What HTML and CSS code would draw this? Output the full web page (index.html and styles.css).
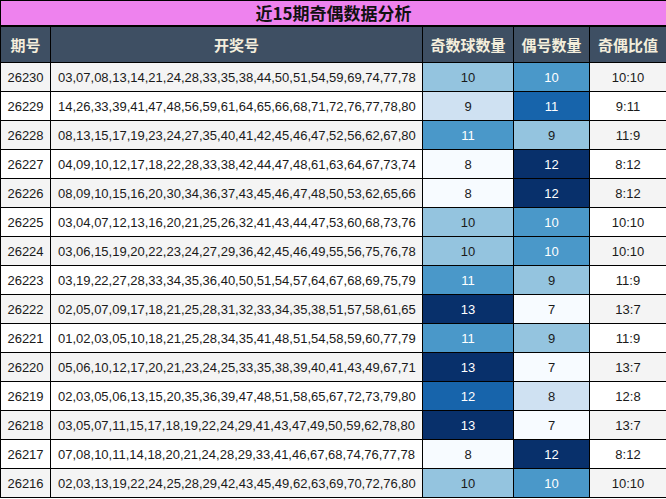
FILE: index.html
```html
<!DOCTYPE html>
<html lang="zh">
<head>
<meta charset="utf-8">
<link rel="stylesheet" href="styles.css">
</head>
<body>
<table class="grid">
  <colgroup>
    <col class="c-issue"><col class="c-nums"><col class="c-odd"><col class="c-even"><col class="c-ratio">
  </colgroup>
  <thead>
    <tr class="title-row"><th colspan="5">近15期奇偶数据分析</th></tr>
    <tr class="head-row"><th>期号</th><th>开奖号</th><th>奇数球数量</th><th>偶号数量</th><th>奇偶比值</th></tr>
  </thead>
  <tbody>
    <tr class="alt"><td>26230</td><td class="nums">03,07,08,13,14,21,24,28,33,35,38,44,50,51,54,59,69,74,77,78</td><td class="b10">10</td><td class="b11 w">10</td><td>10:10</td></tr>
    <tr><td>26229</td><td class="nums">14,26,33,39,41,47,48,56,59,61,64,65,66,68,71,72,76,77,78,80</td><td class="b9">9</td><td class="b12 w">11</td><td>9:11</td></tr>
    <tr class="alt"><td>26228</td><td class="nums">08,13,15,17,19,23,24,27,35,40,41,42,45,46,47,52,56,62,67,80</td><td class="b11 w">11</td><td class="b10">9</td><td>11:9</td></tr>
    <tr><td>26227</td><td class="nums">04,09,10,12,17,18,22,28,33,38,42,44,47,48,61,63,64,67,73,74</td><td class="b8">8</td><td class="b13 w">12</td><td>8:12</td></tr>
    <tr class="alt"><td>26226</td><td class="nums">08,09,10,15,16,20,30,34,36,37,43,45,46,47,48,50,53,62,65,66</td><td class="b8">8</td><td class="b13 w">12</td><td>8:12</td></tr>
    <tr><td>26225</td><td class="nums">03,04,07,12,13,16,20,21,25,26,32,41,43,44,47,53,60,68,73,76</td><td class="b10">10</td><td class="b11 w">10</td><td>10:10</td></tr>
    <tr class="alt"><td>26224</td><td class="nums">03,06,15,19,20,22,23,24,27,29,36,42,45,46,49,55,56,75,76,78</td><td class="b10">10</td><td class="b11 w">10</td><td>10:10</td></tr>
    <tr><td>26223</td><td class="nums">03,19,22,27,28,33,34,35,36,40,50,51,54,57,64,67,68,69,75,79</td><td class="b11 w">11</td><td class="b10">9</td><td>11:9</td></tr>
    <tr class="alt"><td>26222</td><td class="nums">02,05,07,09,17,18,21,25,28,31,32,33,34,35,38,51,57,58,61,65</td><td class="b13 w">13</td><td class="b8">7</td><td>13:7</td></tr>
    <tr><td>26221</td><td class="nums">01,02,03,05,10,18,21,25,28,34,35,41,48,51,54,58,59,60,77,79</td><td class="b11 w">11</td><td class="b10">9</td><td>11:9</td></tr>
    <tr class="alt"><td>26220</td><td class="nums">05,06,10,12,17,20,21,23,24,25,33,35,38,39,40,41,43,49,67,71</td><td class="b13 w">13</td><td class="b8">7</td><td>13:7</td></tr>
    <tr><td>26219</td><td class="nums">02,03,05,06,13,15,20,35,36,39,47,48,51,58,65,67,72,73,79,80</td><td class="b12 w">12</td><td class="b9">8</td><td>12:8</td></tr>
    <tr class="alt"><td>26218</td><td class="nums">03,05,07,11,15,17,18,19,22,24,29,41,43,47,49,50,59,62,78,80</td><td class="b13 w">13</td><td class="b8">7</td><td>13:7</td></tr>
    <tr><td>26217</td><td class="nums">07,08,10,11,14,18,20,21,24,28,29,33,41,46,67,68,74,76,77,78</td><td class="b8">8</td><td class="b13 w">12</td><td>8:12</td></tr>
    <tr class="alt"><td>26216</td><td class="nums">02,03,13,19,22,24,25,28,29,42,43,45,49,62,63,69,70,72,76,80</td><td class="b10">10</td><td class="b11 w">10</td><td>10:10</td></tr>
  </tbody>
</table>
</body>
</html>
```
FILE: styles.css
```css
html, body {
  margin: 0;
  padding: 0;
  background: #ffffff;
}
.grid {
  border-collapse: collapse;
  table-layout: fixed;
  width: 666px;
  font-family: "Liberation Sans", "Noto Sans CJK SC", sans-serif;
  color: #1a1a1a;
}
.c-issue { width: 50px; }
.c-nums { width: 372px; }
.c-odd { width: 91px; }
.c-even { width: 76px; }
.c-ratio { width: 77px; }
.grid th, .grid td {
  border: 1px solid #000;
  text-align: center;
  padding: 0;
  overflow: hidden;
  white-space: nowrap;
}
.title-row th {
  background: #ee82ee;
  height: 24px;
  font-size: 17px;
  font-weight: bold;
  color: #111;
  border-bottom: 2px solid #000;
  font-family: "Noto Sans CJK SC", "Liberation Sans", sans-serif;
  line-height: 24px;
}
.head-row th {
  background: #3e4f63;
  color: #f4eedc;
  height: 35px;
  font-size: 15px;
  font-weight: bold;
  font-family: "Noto Sans CJK SC", "Liberation Sans", sans-serif;
}
.grid td {
  height: 28px;
  font-size: 13px;
  background: #ffffff;
}
.grid tr.alt td {
  background: #f4f4f4;
}
.grid td.nums {
  text-align: left;
  padding-left: 7px;
}
.grid tr td.b8 { background: #f7fbff; }
.grid tr td.b9 { background: #cfe1f2; }
.grid tr td.b10 { background: #94c4df; }
.grid tr td.b11 { background: #4a98c9; }
.grid tr td.b12 { background: #1764ab; }
.grid tr td.b13 { background: #08306b; }
.grid td.w { color: #ffffff; }
```
